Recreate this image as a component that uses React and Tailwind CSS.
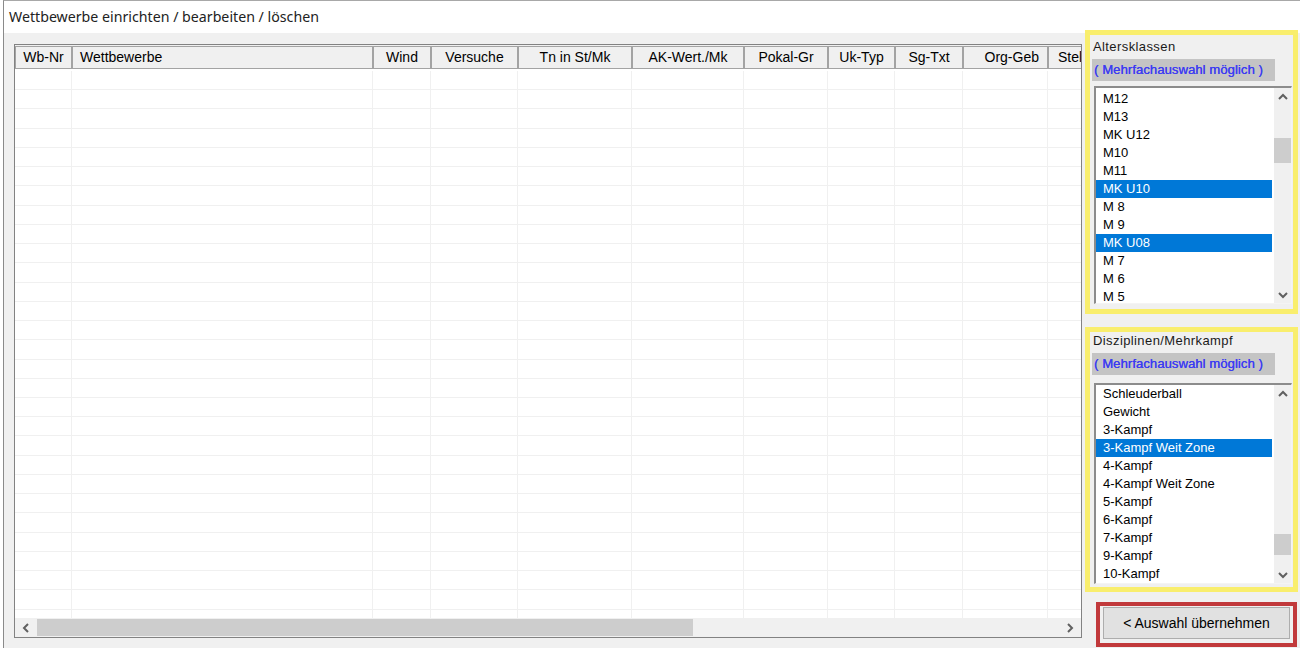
import React from 'react';

const columns = [
  { label: 'Wb-Nr', align: 'text-center' },
  { label: 'Wettbewerbe', align: 'text-left pl-[7px]' },
  { label: 'Wind', align: 'text-center' },
  { label: 'Versuche', align: 'text-center' },
  { label: 'Tn in St/Mk', align: 'text-center' },
  { label: 'AK-Wert./Mk', align: 'text-center' },
  { label: 'Pokal-Gr', align: 'text-center' },
  { label: 'Uk-Typ', align: 'text-center' },
  { label: 'Sg-Txt', align: 'text-center' },
  { label: 'Org-Geb', align: 'text-right pr-[8px]' },
  { label: 'Stellen', align: 'text-left pl-[9px]' },
];

const gridCols = 'grid grid-cols-[57px_301px_58px_87px_114px_112px_84px_67px_68px_85px_80px]';

const altersklassen = [
  { name: 'M12' },
  { name: 'M13' },
  { name: 'MK U12' },
  { name: 'M10' },
  { name: 'M11' },
  { name: 'MK U10', selected: true },
  { name: 'M 8' },
  { name: 'M 9' },
  { name: 'MK U08', selected: true },
  { name: 'M 7' },
  { name: 'M 6' },
  { name: 'M 5' },
];

const disziplinen = [
  { name: 'Schleuderball' },
  { name: 'Gewicht' },
  { name: '3-Kampf' },
  { name: '3-Kampf Weit Zone', selected: true },
  { name: '4-Kampf' },
  { name: '4-Kampf Weit Zone' },
  { name: '5-Kampf' },
  { name: '6-Kampf' },
  { name: '7-Kampf' },
  { name: '9-Kampf' },
  { name: '10-Kampf' },
];

const Chevron = ({ dir }) => {
  const paths = {
    up: 'M1 6 L5 2 L9 6',
    down: 'M1 2 L5 6 L9 2',
    left: 'M6 1 L2 5 L6 9',
    right: 'M2 1 L6 5 L2 9',
  };
  const vertical = dir === 'up' || dir === 'down';
  return (
    <svg width={vertical ? 10 : 8} height={vertical ? 8 : 10} viewBox={vertical ? '0 0 10 8' : '0 0 8 10'}>
      <path d={paths[dir]} fill="none" stroke="#606060" strokeWidth="2" />
    </svg>
  );
};

function ListBox({ items, height, padTop, thumbTop, thumbHeight }) {
  return (
    <div
      className="ml-[4px] w-[198px] flex bg-white border-t-2 border-l-2 border-[#8c8c8c] border-b border-r border-b-[#f4f4f4] border-r-[#f4f4f4]"
      style={{ height }}
    >
      <div className="flex-1 mr-[2px] overflow-hidden" style={{ paddingTop: padTop }}>
        {items.map((it) => (
          <div
            key={it.name}
            className={`h-[18px] leading-[18px] pl-[7px] text-[13px] whitespace-nowrap ${
              it.selected ? 'bg-[#0078d7] text-white' : 'text-black'
            }`}
          >
            {it.name}
          </div>
        ))}
      </div>
      <div className="w-[17px] bg-[#f0f0f0] flex flex-col">
        <div className="h-[17px] flex items-center justify-center">
          <Chevron dir="up" />
        </div>
        <div className="flex-1 relative">
          <div className="absolute left-0 right-0 bg-[#cdcdcd]" style={{ top: thumbTop, height: thumbHeight }} />
        </div>
        <div className="h-[17px] flex items-center justify-center">
          <Chevron dir="down" />
        </div>
      </div>
    </div>
  );
}

function SelectionBox({ title, titlePad, items, listHeight, listPad, thumbTop, thumbHeight, boxHeight, gapLabel, gapList }) {
  return (
    <div className="border-[5px] border-[#f9ee6d] bg-[#f0f0f0]" style={{ height: boxHeight }}>
      <div className="pl-[3px] text-[13px] tracking-[0.4px] leading-[16px] text-[#1a1a1a]" style={{ paddingTop: titlePad }}>
        {title}
      </div>
      <div
        className="ml-[2px] w-[183px] h-[22px] bg-[#c4c4c4] text-[#3c3cf2] text-[13px] tracking-[0.1px] leading-[22px] pl-[2px] whitespace-nowrap [text-shadow:0.3px_0_0_#3c3cf2]"
        style={{ marginTop: gapLabel }}
      >
        ( Mehrfachauswahl möglich )
      </div>
      <div style={{ marginTop: gapList }}>
        <ListBox items={items} height={listHeight} padTop={listPad} thumbTop={thumbTop} thumbHeight={thumbHeight} />
      </div>
    </div>
  );
}

export default function App() {
  const rows = Array.from({ length: 30 });

  return (
    <div className="w-[1300px] h-[648px] overflow-hidden bg-white pl-[3px] font-['Liberation_Sans',Arial,sans-serif]">
      <div className="h-full flex flex-col border-l border-t border-l-[#8a8a8a] border-t-[#a8a8a8]">
        {/* Titelzeile */}
        <div className="h-[32px] shrink-0 bg-white pl-[5px] flex items-center text-[14.2px] text-[#222] font-['Noto_Sans','Open_Sans',sans-serif]">
          Wettbewerbe einrichten / bearbeiten / löschen
        </div>

        <div className="flex-1 bg-[#f0f0f0] flex">
          {/* Tabelle der Wettbewerbe */}
          <div className="pl-[10px] pt-[11px]">
            <div className="w-[1068px] h-[594px] border border-[#828282] bg-white flex flex-col overflow-hidden">
              <div className={`${gridCols} h-[24px] shrink-0 bg-[#f0f0f0] pt-px`}>
                {columns.map((c) => (
                  <div
                    key={c.label}
                    className={`h-[23px] leading-[21px] border border-[#a3a3a3] bg-[#f0f0f0] text-[14px] text-black whitespace-nowrap overflow-hidden ${c.align}`}
                  >
                    {c.label}
                  </div>
                ))}
              </div>
              <div className="flex-1 overflow-hidden pt-[2px]">
                {rows.map((_, i) => (
                  <div key={i} className={`${gridCols} h-[19.24px] border-b border-[#f0f0f0]`}>
                    {columns.map((c) => (
                      <div key={c.label} className="border-r border-[#f0f0f0]" />
                    ))}
                  </div>
                ))}
              </div>
              {/* horizontale Bildlaufleiste */}
              <div className="h-[19px] shrink-0 bg-[#f0f0f0] flex items-center">
                <div className="w-[22px] h-full flex items-center justify-center">
                  <Chevron dir="left" />
                </div>
                <div className="flex-1 h-full relative">
                  <div className="absolute top-[1px] bottom-[1px] left-0 w-[656px] bg-[#cdcdcd]" />
                </div>
                <div className="w-[22px] h-full flex items-center justify-center">
                  <Chevron dir="right" />
                </div>
              </div>
            </div>
          </div>

          {/* Auswahl rechts */}
          <div className="ml-[3px] w-[213px] -mt-[3px] flex flex-col">
            <SelectionBox
              title="Altersklassen"
              titlePad={4}
              gapLabel={4}
              gapList={5}
              items={altersklassen}
              boxHeight={284}
              listHeight={218}
              listPad={2}
              thumbTop={33}
              thumbHeight={25}
            />
            <div className="mt-[13px]">
              <SelectionBox
                title="Disziplinen/Mehrkampf"
                titlePad={1}
                gapLabel={4}
                gapList={8}
                items={disziplinen}
                boxHeight={265}
                listHeight={201}
                listPad={0}
                thumbTop={132}
                thumbHeight={21}
              />
            </div>
            <div className="mt-[10px] ml-[11px] w-[201px] h-[45px] border-[4px] border-[#c1393b] px-[3px] pt-[1px] bg-[#f0f0f0]">
              <div className="h-[32px] bg-[#e1e1e1] border border-[#adadad] flex items-center justify-center text-[14px] text-black">
                &lt; Auswahl übernehmen
              </div>
            </div>
          </div>
        </div>
      </div>
    </div>
  );
}
